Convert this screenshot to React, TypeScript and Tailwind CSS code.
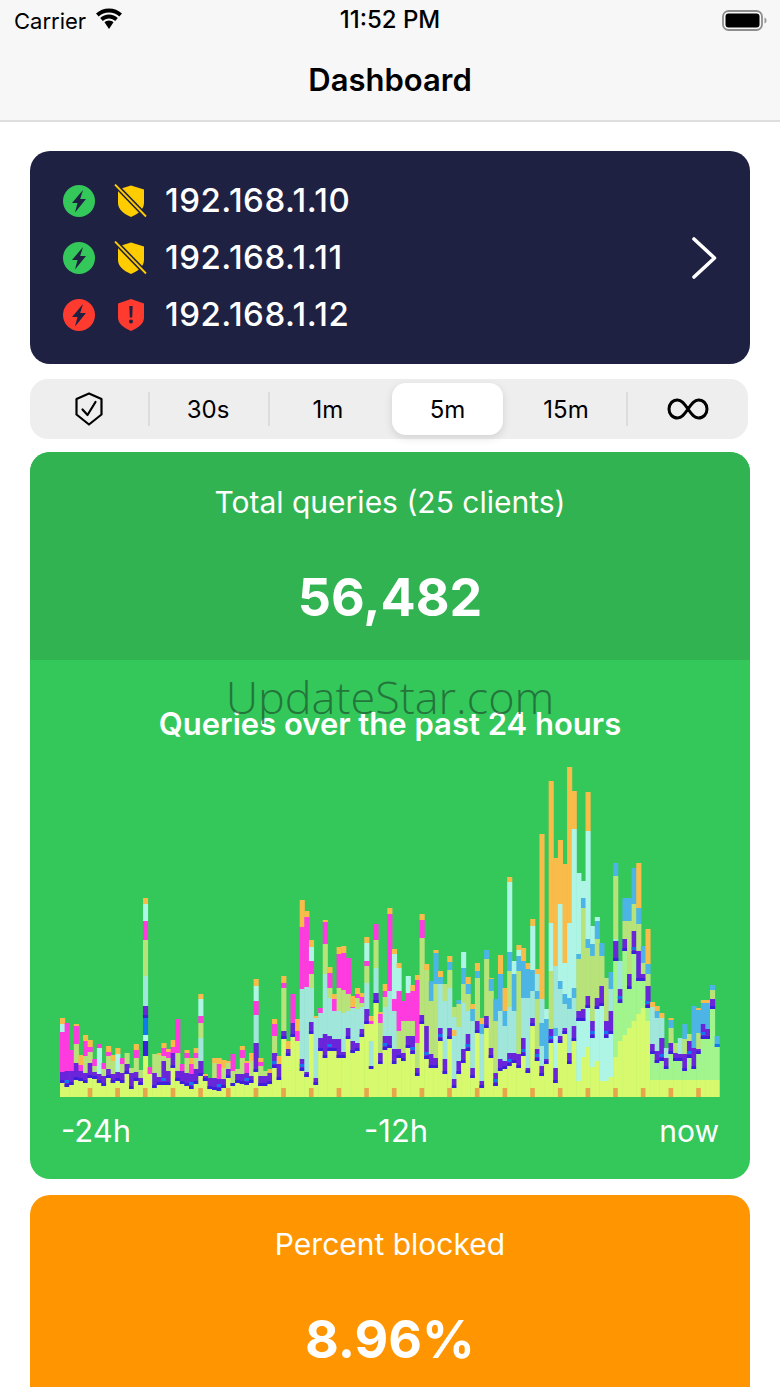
import React from "react";

// colours of the stacked chart, one letter per series
const SERIES: Record<string, string> = {
  y: "#d6f96e",
  g: "#a2f58c",
  p: "#6a25db",
  i: "#3a1fdb",
  b: "#1278f0",
  w: "#b8f7ec",
  c: "#aef5e6",
  t: "#a0e6da",
  l: "#b8e27a",
  s: "#4db5e6",
  m: "#ff3be0",
  o: "#f9bc4a",
};

// cumulative height of every segment in each bar, from the bottom up
const BARS = [
  "y14 p25 m65 c73 o79", "y10 p26 m74", "y12 p26 m47", "y17 p34 l53 m71 o73", "y16 p26 m32 o42", "y14 p24 l41 m56 o62",
  "y19 p34 l45 m50 o57", "y18 p25 l31 m38", "y14 p23 c49 m53", "y11 p21 l28 m34", "y19 p28 l41 m45 o51", "y14 p23 l36 o42",
  "y16 p25 c43 o49", "y14 p24 l33 m39", "y23 p33 l44", "y8 p24 l29", "y16 p25 l39 m47 o53", "y12 p19 l27",
  "y41 i56 w62 b79 p91 t121 l157 m176 c193 o199", "y23 m30", "y9 p24 l43", "y12 p20 l42 o44", "y12 p36 l41 m49 o54", "y12 p26 l39 m45 o48",
  "y29 p44 m50 o57", "y16 p26 l44 m78", "y13 p26 m33", "y11 p24 l39 m44 o47", "y8 p23 m33 o39", "y13 p28 l39 m44 o49",
  "y21 p36 t59 l74 m81 c98 o103", "y16 p21 o23", "y8 p19", "y7 p19 l34 o39", "y6 p18 m33 o39", "y9 p18 l29 o37",
  "y19 p28 l34 o36", "y11 p14 l26 m43", "y14 p23 l28", "y13 p23 l39 m47 o51", "y12 p24 m34 o36", "y14 p21 l36 o44",
  "y25 p54 t82 m96 c111 o118", "y11 p21 l31 m35 o39", "y11 p21 l26", "y13 p24 o28", "y29 p44 l61 m73 o78", "y17 p33 o41",
  "y58 p66 l109 m114 o121", "y41 p48 o56", "y60 p74 m103", "y56 m66 o78", "y26 p38 t108 m170 o197", "y20 p25 t110 m180 o186",
  "y63 p75 t109 l123 m136 c150 o157", "y12 p19 t79 o81", "y46 p59 t84 m89", "y39 p63 t123 l153 m175 o177", "y46 p61 t99 l109 m124 o130", "y46 p58 t86 m98 o103",
  "y39 p58 t86 l109 m143 o150", "y39 p45 t84 l107 m144 o151", "y58 p69 t86 l103 m139", "y44 p56 t89 m90 o101", "y46 p54 t88 l99 m103 o109", "y60 p68 t90 l94 m100 o104",
  "y73 p88 t114 l131 m136 c154 o160", "y28 p31 t56 y73 m76 o81", "y94 p104 t129 l157 m173", "y33 p44 l74 m83 o85", "y47 p61 t90 l100 m106 o113", "y49 p61 t106 m183 o189",
  "y33 p48 t86 m98 c143 o148", "y39 p48 l66 m106 c129 o134", "y36 p44 l76 m96", "y49 p61 l76 m104 c121", "y43 p61 l76 m106 o112", "y21 p29 l54 m117 o122",
  "y73 p82 l159 m177 o183", "y38 p71 l127 o133", "y29 p43 l96 s116", "y29 p39 l113 s144 o147", "y56 p69 t113 s120 o126", "y23 p38 t96 l113",
  "y58 p69 t109 l127 s135 o141", "y9 p18 t61 o67 t80 l90", "y23 p36 t70 l93 s97", "y34 p48 t94 l113 s129 c145", "y46 p63 t86 l103 s113 o120", "y19 p29 t76 s88 o93",
  "y64 p76 l119 s126 o134", "y9 p16 t63 s73 o79", "y69 p81 l138 s147", "y39 p49 l106 s118 o119", "y11 p24 l76 s98", "y26 p38 t86 s123 o142",
  "y28 p36 t71 s86 o109", "y31 p44 t90 l126 s145 c215 o220", "y34 p44 t86 s123 c136", "y29 p43 l126 s141 c147 o152", "y41 p59 t99 s136 c136 o149", "y24 p29 t99 s128 o134",
  "y71 p79 t106 s127 c171 o178", "y36 p48 l98 s106 t123 o128", "y21 p31 t51 s74 t98 o263", "y33 p38 s78 c88", "y54 p68 l126 c174 o316", "y14 p29 c61 s69 t131 o239",
  "y54 p61 t108 s116 c193 o257", "y63 p69 t93 s103 c134 o233", "y33 p44 t88 s99 c174 o330", "y56 p71 t99 s109 c268 o306", "y76 p86 l138 s143 c224", "y76 p88 l189 s199 c216",
  "y89 p101 l149 s158 c266 o305", "y59 p76 l141 s153 c171", "y88 p99 l158 s176 c180", "y91 p111 l141 s154", "y59 p76 l119", "y63 p86 t108 s125",
  "y136 p156 t158 l221 s234", "y94 p108 t136", "y146 p158 l176 s199", "y108 p123 l176 s199", "y143 p166 l193 s229", "y116 p146 l173 s189 o234",
  "y116 p123 l134 s151", "y89 p111 l123 s133 o168", "y43 p53 t90 o95", "y34 p46 t79 s86 o91", "y36 p59 t79 o84", "y28 p39 t49",
  "y43 p54 l69 s77 o79", "y36 p44 l54", "y36 p43 t59", "y26 p43 l58 s73", "y39 p56 l63", "y28 p49 s91",
  "y43 p48 l64 s87 o89", "y58 p73 s94 o97", "y58 p68 s94 o97", "y88 p98 l107 s112", "y50 b53 s61",
];

// height where the yellow base gives way to the paler series, bars 112 to 127
const YELLOW_CAP = [16, 40, 50, 30, 36, 16, 16, 20, 40, 56, 62, 69, 76, 83, 89, 76];

const CHART_H = 332;
const BAR_W = 4.61;
const DRAW_W = BAR_W + 0.5; // small overlap, hides the seams between bars

function QueriesChart() {
  return (
    <svg width={660} height={CHART_H} viewBox={`0 0 660 ${CHART_H}`} className="block">
      {BARS.map((bar, i) => {
        let prev = 0;
        return (
          <g key={i}>
            {bar.split(" ").map((seg, j) => {
              const top = Number(seg.slice(1));
              const from = prev;
              prev = top;
              const letter = seg[0];
              // the lowest series fades to a paler green on the right side
              if (j === 0 && letter === "y" && i >= 112) {
                const cap = i >= 128 ? 17 : YELLOW_CAP[i - 112];
                const mid = Math.min(cap, top);
                return (
                  <g key={j}>
                    <rect x={i * BAR_W} y={CHART_H - top} width={DRAW_W} height={top - mid} fill={i >= 120 ? SERIES.g : SERIES.c} />
                    <rect x={i * BAR_W} y={CHART_H - mid} width={DRAW_W} height={mid} fill={SERIES.y} />
                  </g>
                );
              }
              // purple bands sit on a thin indigo edge, some with a blue fleck
              if (letter === "p") {
                const h = top - from;
                return (
                  <g key={j}>
                    <rect x={i * BAR_W} y={CHART_H - top} width={DRAW_W} height={h} fill={SERIES.p} />
                    <rect x={i * BAR_W} y={CHART_H - from - 3} width={DRAW_W} height={3} fill={SERIES.i} />
                    {i % 3 === 1 && h > 10 && (
                      <rect x={i * BAR_W} y={CHART_H - from - 7} width={DRAW_W} height={3} fill={SERIES.b} />
                    )}
                  </g>
                );
              }
              return (
                <rect key={j} x={i * BAR_W} y={CHART_H - top} width={DRAW_W} height={top - from} fill={SERIES[letter]} />
              );
            })}
          </g>
        );
      })}
      {BARS.map((_, i) =>
        i % 6 === 0 && i > 0 ? <rect key={i} x={i * BAR_W} y={CHART_H - 9} width={BAR_W} height={9} fill="#e8a64c" /> : null
      )}
    </svg>
  );
}

function Bolt({ color }: { color: string }) {
  return (
    <svg width={32} height={32} viewBox="0 0 32 32">
      <circle cx={16} cy={16} r={16} fill={color} />
      <path d="M20 5 9 18h5.500l-2.500 9.500 11-13.500h-5.800z" fill="#1f2143" />
    </svg>
  );
}

function ShieldOff() {
  return (
    <svg width={34} height={34} viewBox="0 0 34 34">
      <path d="M4 5.500 17 1.500l13 4v13.500c0 6.500-6 11-13 14-7-3-13-7.500-13-14z" fill="#ffcc00" />
      <path d="M1 0.500 32 32.500" stroke="#1f2143" strokeWidth={5} />
      <path d="M1 0.500 32 32.500" stroke="#ffcc00" strokeWidth={1.800} />
    </svg>
  );
}

function ShieldAlert() {
  return (
    <svg width={34} height={34} viewBox="0 0 34 34">
      <path d="M4 5.500 17 1l13 4.500v14c0 6.500-6 10.500-13 13.500-7-3-13-7-13-13.500z" fill="#ff3b30" />
      <path d="M15.300 8h3.400l-.5 11.500h-2.400z" fill="#1f2143" />
      <circle cx={17} cy={23.500} r={2} fill="#1f2143" />
    </svg>
  );
}

function HostRow({ ip, ok }: { ip: string; ok: boolean }) {
  return (
    <div className="flex h-[57px] items-center">
      <Bolt color={ok ? "#34c759" : "#ff3b30"} />
      <div className="ml-[19px] mr-[17px] flex w-[34px] justify-center">{ok ? <ShieldOff /> : <ShieldAlert />}</div>
      <span className="text-[33px] font-medium leading-none tracking-[0.5px] text-white">{ip}</span>
    </div>
  );
}

function Divider() {
  return <div className="h-[34px] w-[2px] bg-[#dcdcdc]" />;
}

function Segment({ label }: { label: string }) {
  return <div className="flex h-[52px] w-[118px] items-center justify-center pr-[2px] pt-[2px] text-[24px] text-black">{label}</div>;
}

export default function App() {
  return (
    <div
      className="relative h-[1387px] w-[780px] overflow-hidden bg-white"
      style={{ fontFamily: 'Inter, "Liberation Sans", sans-serif' }}
    >
      {/* status + nav bar */}
      <div className="h-[122px] border-b-2 border-[#dedede] bg-[#f7f7f7]">
        <div className="relative flex h-[40px] items-center justify-between pl-[14px] pr-[12px] pt-[2px]">
          <div className="flex items-center gap-[9px]">
            <span className="text-[22px] leading-none text-black">Carrier</span>
            <svg width={28} height={22} viewBox="0 0 28 22" className="mb-[4px]">
              <path d="M14 4.500c4 0 7.600 1.500 10.300 4.100l2.700-3C23.500 2.300 19 .5 14 .5S4.500 2.300 1 5.600l2.700 3C6.400 6 10 4.500 14 4.500z" fill="#000" />
              <path d="M14 10.500c2.400 0 4.500.9 6.200 2.400l2.600-3C20.500 7.800 17.400 6.500 14 6.500s-6.500 1.300-8.800 3.400l2.600 3c1.700-1.500 3.800-2.400 6.200-2.400z" fill="#000" />
              <path d="M14 12.500c-1.800 0-3.300.7-4.500 1.800L14 21l4.500-6.700c-1.200-1.100-2.700-1.800-4.500-1.800z" fill="#000" />
            </svg>
          </div>
          <span className="absolute left-0 right-0 top-[8px] text-center text-[24px] font-medium leading-none text-black">
            11:52 PM
          </span>
          <svg width={46} height={24} viewBox="0 0 46 24">
            <rect x={1} y={2} width={39} height={19} rx={5.500} fill="none" stroke="#8e8e8e" strokeWidth={1.800} />
            <rect x={3.500} y={4.500} width={34} height={14} rx={3} fill="#000" />
            <path d="M42.500 8.500c1.500.5 2 1.800 2 3s-.5 2.500-2 3z" fill="#9a9a9a" />
          </svg>
        </div>
        <div className="flex h-[80px] items-center justify-center pb-[2px] text-[31px] font-semibold leading-none text-black">
          Dashboard
        </div>
      </div>

      <div className="flex flex-col px-[30px] pt-[29px]">
        {/* hosts */}
        <div className="flex h-[213px] items-center justify-between rounded-[20px] bg-[#1f2143] pl-[33px] pr-[33px]">
          <div className="flex flex-col">
            <HostRow ip="192.168.1.10" ok />
            <HostRow ip="192.168.1.11" ok />
            <HostRow ip="192.168.1.12" ok={false} />
          </div>
          <svg width={28} height={44} viewBox="0 0 28 44" className="mr-[-1px]">
            <path d="M4 3 24.500 22 4 41" fill="none" stroke="#fff" strokeWidth={3.600} strokeLinecap="round" strokeLinejoin="round" />
          </svg>
        </div>

        {/* refresh interval */}
        <div className="mt-[15px] flex h-[60px] w-[718px] items-center rounded-[18px] bg-[#eeeeee] pl-[2px]">
          <div className="flex w-[116px] justify-center pr-[2px]">
            <svg width={28} height={34} viewBox="0 0 28 34" fill="none" stroke="#000" strokeWidth={2.200} strokeLinejoin="round" strokeLinecap="round">
              <path d="M14 1.500 26.500 7v15.500L14 32.500 1.500 22.500V7z" />
              <path d="M7.500 17.500 12.500 23 20.500 10" />
            </svg>
          </div>
          <Divider />
          <Segment label="30s" />
          <Divider />
          <Segment label="1m" />
          <div className="ml-[4px] flex h-[52px] w-[111px] items-center justify-center rounded-[14px] bg-white pt-[2px] text-[24px] text-black shadow-[0_3px_8px_rgba(0,0,0,0.12)]">
            5m
          </div>
          <div className="flex h-[52px] w-[123px] items-center justify-center pl-[3px] pt-[2px] text-[24px] text-black">15m</div>
          <Divider />
          <div className="flex flex-1 justify-center">
            <svg width={42} height={22} viewBox="0 0 42 22" fill="none" stroke="#000" strokeWidth={3}>
              <path d="M21 11C17 5 14.500 2 10.500 2 5.500 2 2 6 2 11s3.500 9 8.500 9c4 0 6.500-3 10.500-9zm0 0c4-6 6.500-9 10.500-9 5 0 8.500 4 8.500 9s-3.500 9-8.500 9c-4 0-6.500-3-10.500-9z" />
            </svg>
          </div>
        </div>

        {/* total queries */}
        <div className="mt-[13px] h-[727px] overflow-hidden rounded-[20px] bg-[#34c759] text-white">
          <div className="flex h-[208px] flex-col items-center bg-[#30b350]">
            <div className="mt-[32px] text-[30px] leading-[36px]">Total queries (25 clients)</div>
            <div className="mt-[48px] text-[52px] font-bold leading-[60px]">56,482</div>
          </div>
          <div className="pt-[47px] text-center text-[31px] font-semibold leading-[34px]">Queries over the past 24 hours</div>
          <div className="ml-[30px] mt-[24px]">
            <QueriesChart />
          </div>
          <div className="flex justify-between px-[31px] pt-[16px] text-[31px] leading-[36px]">
            <span>-24h</span>
            <span className="ml-[2px]">-12h</span>
            <span className="text-[30px]">now</span>
          </div>
        </div>

        {/* percent blocked */}
        <div className="mt-[16px] h-[300px] rounded-[20px] bg-[#ff9500] text-white">
          <div className="flex flex-col items-center">
            <div className="mt-[31px] text-[30px] leading-[36px]">Percent blocked</div>
            <div className="mt-[48px] text-[52px] font-bold leading-[60px]">8.96%</div>
          </div>
        </div>
      </div>

      {/* site watermark over the screenshot */}
      <div
        className="absolute left-0 right-0 top-[670px] text-center text-[45px] font-light leading-[54px] text-[#1f5f35]/80"
        style={{ fontFamily: '"Open Sans", sans-serif' }}
      >
        UpdateStar.com
      </div>
    </div>
  );
}
